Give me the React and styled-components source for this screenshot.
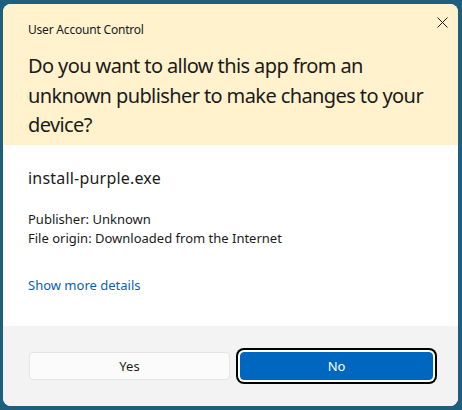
import React from "react";
import styled, { createGlobalStyle } from "styled-components";

const Global = createGlobalStyle`
  html, body { margin: 0; padding: 0; background: #1f5f7e; }
  body { font-family: "Noto Sans", "Open Sans", sans-serif; color: #1a1a1a; }
  * { box-sizing: border-box; }
`;

const Dialog = styled.div`
  margin: 4px 4px 4px 3px;
  width: 455px;
  height: 402px;
  border-radius: 8px;
  overflow: hidden;
  display: flex;
  flex-direction: column;
  background: #fff;
`;

const Header = styled.div`
  position: relative;
  background: #fff2cd;
  padding: 18px 24px 6px 25px;
  height: 141px;
`;

const Caption = styled.div`
  font-size: 12px;
  line-height: 16px;
  letter-spacing: -0.2px;
  color: #1b1b1b;
`;

const Question = styled.h1`
  margin: 13px 0 0;
  font-size: 20px;
  font-weight: 400;
  line-height: 29.5px;
  color: #1b1b1b;
  letter-spacing: -0.6px;
`;

const Close = styled.button`
  position: absolute;
  top: 4px;
  right: 0;
  width: 32px;
  height: 28px;
  border: 0;
  background: transparent;
  display: flex;
  align-items: center;
  justify-content: center;
  padding: 0;
`;

const Body = styled.div`
  flex: 1;
  padding: 21px 24px 0 25px;
`;

const FileName = styled.div`
  font-size: 16px;
  line-height: 24px;
  letter-spacing: 0.2px;
  color: #1b1b1b;
`;

const Meta = styled.div`
  margin-top: 20px;
  font-size: 13px;
  line-height: 19px;
  color: #1b1b1b;
`;

const Link = styled.a`
  display: inline-block;
  margin-top: 28px;
  font-size: 13px;
  line-height: 19px;
  color: #0a5fb4;
  text-decoration: none;
`;

const Footer = styled.div`
  height: 80px;
  background: #f3f3f3;
  display: flex;
  align-items: center;
  gap: 10px;
  padding: 0 25px 0 26px;
`;

const Button = styled.button`
  height: 28px;
  border-radius: 4px;
  font-family: inherit;
  font-size: 13px;
  padding: 0;
  ${(p) =>
    p.$primary
      ? `
    flex: 1;
    background: #0067c0;
    color: #fff;
    border: 1px solid #0067c0;
    box-shadow: 0 0 0 2px #fff, 0 0 0 4px #000;
  `
      : `
    width: 201px;
    background: #fbfbfb;
    color: #1b1b1b;
    border: 1px solid #e5e5e5;
  `}
`;

export default function App() {
  return (
    <>
      <Global />
      <Dialog>
        <Header>
          <Caption>User Account Control</Caption>
          <Question>
            Do you want to allow this app from an unknown publisher to make
            changes to your device?
          </Question>
          <Close aria-label="Close">
            <svg width="11" height="11" viewBox="0 0 11 11">
              <path d="M0.5 0.5 L10.5 10.5 M10.5 0.5 L0.5 10.5" stroke="#1b1b1b" strokeWidth="1" />
            </svg>
          </Close>
        </Header>
        <Body>
          <FileName>install-purple.exe</FileName>
          <Meta>
            Publisher: Unknown
            <br />
            File origin: Downloaded from the Internet
          </Meta>
          <Link href="#">Show more details</Link>
        </Body>
        <Footer>
          <Button>Yes</Button>
          <Button $primary>No</Button>
        </Footer>
      </Dialog>
    </>
  );
}
